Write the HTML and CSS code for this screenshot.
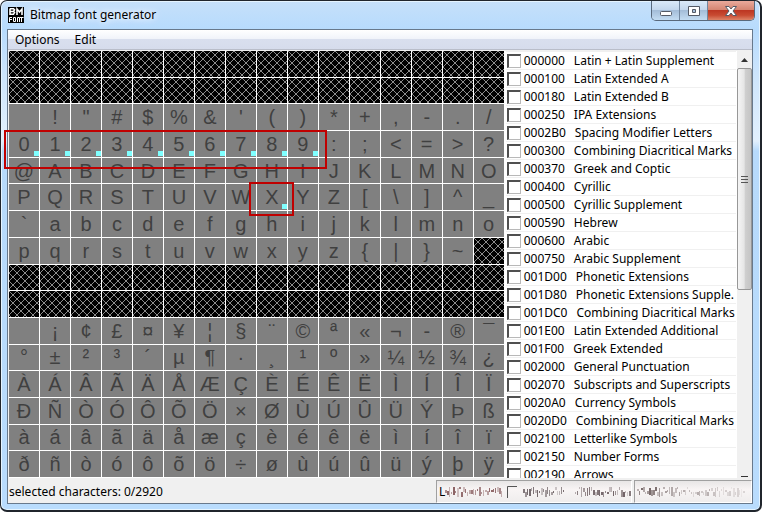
FILE: index.html
```html
<!DOCTYPE html>
<html lang="en">
<head>
  <meta charset="UTF-8">
  <meta name="viewport" content="width=device-width, initial-scale=1.0">
  <title>Bitmap font generator</title>
  <link rel="stylesheet" href="styles.css">
</head>
<body>
  <div class="window">
    <header class="titlebar">
      <svg class="app-icon" width="16" height="16" viewBox="0 0 16 16" aria-hidden="true">
        <rect width="16" height="16" fill="#000"/>
        <g fill="none" stroke="#fff">
          <path stroke-width="1.6" d="M2 1.800h3.500l1 1-1 1.700H2M5.500 4.500l1 1-1 1.800H2V1.500M9 8V2l2.500 3L14 2v6"/>
          <path d="M1.500 15v-4.500H4M1.500 12.500H4M5.500 10.500h2v4h-2zM9.500 15v-4.500h2V15M12 10.500h3.500M13.500 10.500V15"/>
        </g>
      </svg>
      <h1>Bitmap font generator</h1>
      <div class="window-buttons">
        <button class="win-button" aria-label="Minimize">
          <svg width="14" height="12" viewBox="0 0 14 12"><rect x="1.500" y="6.500" width="11" height="4" rx="1" fill="#fff" stroke="#545a66"/></svg>
        </button>
        <button class="win-button" aria-label="Maximize">
          <svg width="14" height="12" viewBox="0 0 14 12"><path fill="#fff" stroke="#545a66" fill-rule="evenodd" d="M1.500 1.500h11v9h-11zM5.500 4.500h3v3h-3z"/></svg>
        </button>
        <button class="win-button close" aria-label="Close">
          <svg width="14" height="12" viewBox="0 0 14 12"><path fill="#fff" stroke="#545a66" d="M1.500 1.500H5L7 4l2-2.500h3.500L9 6l3.500 4.500H9L7 8l-2 2.500H1.500L5 6z"/></svg>
        </button>
      </div>
    </header>

    <div class="client">
      <nav class="menubar">
        <button>Options</button>
        <button>Edit</button>
      </nav>

      <main class="content">
        <div class="glyphs" id="glyphs">
          <div class="mark digits"></div>
          <div class="mark letter"></div>
        </div>
        <div class="sidebar">
          <div class="ranges" id="ranges"></div>
          <div class="scrollbar">
            <svg class="arrow" width="15" height="17" viewBox="0 0 15 17"><path d="M4 11l3.500-4 3.500 4z" fill="#333"/></svg>
            <div class="thumb"><i></i><i></i><i></i></div>
            <svg class="arrow down" width="15" height="4" viewBox="0 0 15 4"><path d="M4 2h7v1H4z" fill="#333"/></svg>
          </div>
        </div>
      </main>

      <footer class="statusbar">
        <span>selected characters: 0/2920</span>
        <div class="panes">
          <div class="pane wide">L
            <svg class="smear" id="smearLeft" height="18"></svg>
          </div>
          <div class="pane">
            <svg class="smear" id="smearRight" height="18"></svg>
          </div>
        </div>
      </footer>
    </div>
  </div>
  <script src="app.js"></script>
</body>
</html>
```
FILE: styles.css
```css
* {
  box-sizing: border-box;
}

body {
  margin: 0;
  height: 100vh;
  background: #fff;
  font-family: "Noto Sans", "Open Sans", sans-serif;
  font-size: 12px;
  color: #000;
}

button {
  font: inherit;
  color: inherit;
  border: none;
  background: none;
  padding: 0;
  margin: 0;
}

.window {
  display: flex;
  flex-direction: column;
  height: 100vh;
  padding: 0 7px 6px 6px;
  border: 1px solid #20252c;
  border-right-width: 2px;
  border-bottom-width: 2px;
  border-radius: 7px;
  background: linear-gradient(#c6e0fa, #b7dbfd 28px, #cfe6fc 80px, #e2f0fd 140px, #b7dafb 150px, #b9dcfd);
  box-shadow: inset 0 0 0 1px #e5f4ff;
}

.titlebar {
  display: flex;
  align-items: flex-start;
  height: 28px;
  padding-left: 1px;
}

.app-icon {
  margin-top: 6px;
}

.titlebar h1 {
  flex: 1;
  margin: 5px 0 0 6px;
  font-size: 12px;
  font-weight: normal;
  line-height: 18px;
  text-shadow: 0 0 6px #fff, 0 0 10px #fff;
}

.window-buttons {
  display: flex;
  margin-right: -2px;
  border: 1px solid #59697c;
  border-top: none;
  border-radius: 0 0 5px 5px;
  overflow: hidden;
}

.win-button {
  display: flex;
  align-items: center;
  justify-content: center;
  width: 28px;
  height: 19px;
  background: linear-gradient(#dae9f8, #c2d6ec 48%, #a4bdd8 50%, #c3dcf2);
  border-right: 1px solid #71869e;
}

.win-button.close {
  width: 46px;
  border-right: none;
  background: linear-gradient(#e9aa9c, #d48572 46%, #bd3723 50%, #c84b32 75%, #dd8468);
}

.client {
  flex: 1;
  min-height: 0;
  display: flex;
  flex-direction: column;
  border: 1px solid #68798c;
  background: #f0f0f0;
}

.menubar {
  display: flex;
  gap: 15px;
  flex: none;
  height: 20px;
  padding-left: 7px;
  border-bottom: 1px solid #b9bdc9;
  background: linear-gradient(#fff, #f1f4fa 45%, #d9dfee 50%, #d6dcec);
}

.content {
  flex: 1;
  min-height: 0;
  display: flex;
  border-top: 1px solid #f0f0f0;
}

.glyphs {
  flex: 497;
  position: relative;
  display: grid;
  grid-template-columns: repeat(16, 1fr);
  grid-template-rows: repeat(16, 1fr);
  padding-left: 1px;
}

.glyph {
  position: relative;
  min-height: 0;
  border-right: 1px solid #fff;
  border-bottom: 1px solid #fff;
  background: #808080;
  color: #404040;
  font-family: "Liberation Sans", Arial, sans-serif;
  font-size: 20px;
  line-height: 24px;
}

.glyph.empty {
  background-color: #000;
  background-image:
    linear-gradient(45deg, transparent 46%, #8c8c8c 46% 54%, transparent 54%),
    linear-gradient(-45deg, transparent 46%, #8c8c8c 46% 54%, transparent 54%);
  background-size: 8px 8px;
}

.glyph.selected::after {
  content: "";
  position: absolute;
  right: 0;
  bottom: 1px;
  width: 5px;
  height: 5px;
  background: #80ffff;
}

/* outlines drawn over the picked characters */
.mark {
  position: absolute;
  z-index: 1;
  border: 2px solid #c00000;
  pointer-events: none;
}

.mark.digits {
  left: -4px;
  top: 79px;
  width: 323px;
  height: 39px;
}

.mark.letter {
  left: 241px;
  top: 131px;
  width: 45px;
  height: 34px;
}

.sidebar {
  flex: 248;
  min-width: 0;
  display: flex;
  background: #fff;
}

.ranges {
  flex: 1;
  min-width: 0;
  padding: 0 1px;
  overflow: hidden;
}

.range {
  display: flex;
  align-items: center;
  height: 18px;
  border-top: 1px solid #f0f0f0;
  white-space: nowrap;
  overflow: hidden;
}

.range input {
  appearance: none;
  flex: none;
  width: 14px;
  height: 14px;
  margin: 0 3px 0 1px;
  border: 1px solid #b8b8b8;
  border-top: 2px solid #505050;
  border-left: 2px solid #505050;
  background: #fff;
}

.range .code {
  margin-right: 9px;
}

.scrollbar {
  flex: none;
  display: flex;
  flex-direction: column;
  width: 15px;
  background: #f0f0f0;
}

.arrow {
  flex: none;
}

.arrow.down {
  margin-top: auto;
}

.thumb {
  display: flex;
  flex-direction: column;
  align-items: center;
  justify-content: center;
  gap: 2px;
  height: 52%;
  border: 1px solid #979797;
  border-radius: 2px;
  background: linear-gradient(to right, #f5f5f5, #e5e5e5 48%, #cfcfcf 55%, #c4c4c4);
}

.thumb i {
  width: 7px;
  height: 1px;
  background: #555;
}

.statusbar {
  flex: none;
  display: flex;
  justify-content: space-between;
  height: 25px;
  padding-left: 1px;
  line-height: 28px;
}

.panes {
  display: flex;
  width: 316px;
  height: 23px;
  margin-top: 2px;
  gap: 2px;
}

.pane {
  flex: 117;
  display: flex;
  align-items: center;
  overflow: hidden;
  border: 1px solid #a0a0a0;
  border-right-color: #fff;
  border-bottom-color: #fff;
  padding-left: 2px;
  background: linear-gradient(#e8e6e6, #f8f4f4 40%, #efeded);
}

.pane.wide {
  flex: 197;
}

.smear {
  flex: 1;
  min-width: 0;
}
```
FILE: app.js
```js
const rows = [
  '', '',
  ' !"#$%&\'()*+,-./',
  '0123456789:;<=>?',
  '@ABCDEFGHIJKLMNO',
  'PQRSTUVWXYZ[\\]^_',
  '`abcdefghijklmno',
  'pqrstuvwxyz{|}~',
  '', '',
  ' ¡¢£¤¥¦§¨©ª«¬-®¯',
  '°±²³´µ¶·¸¹º»¼½¾¿',
  'ÀÁÂÃÄÅÆÇÈÉÊËÌÍÎÏ',
  'ÐÑÒÓÔÕÖ×ØÙÚÛÜÝÞß',
  'àáâãäåæçèéêëìíîï',
  'ðñòóôõö÷øùúûüýþÿ'
];
const selected = '0123456789X';

const ranges = [
  ['000000', 'Latin + Latin Supplement'],
  ['000100', 'Latin Extended A'],
  ['000180', 'Latin Extended B'],
  ['000250', 'IPA Extensions'],
  ['0002B0', 'Spacing Modifier Letters'],
  ['000300', 'Combining Diacritical Marks'],
  ['000370', 'Greek and Coptic'],
  ['000400', 'Cyrillic'],
  ['000500', 'Cyrillic Supplement'],
  ['000590', 'Hebrew'],
  ['000600', 'Arabic'],
  ['000750', 'Arabic Supplement'],
  ['001D00', 'Phonetic Extensions'],
  ['001D80', 'Phonetic Extensions Supple.'],
  ['001DC0', 'Combining Diacritical Marks'],
  ['001E00', 'Latin Extended Additional'],
  ['001F00', 'Greek Extended'],
  ['002000', 'General Punctuation'],
  ['002070', 'Subscripts and Superscripts'],
  ['0020A0', 'Currency Symbols'],
  ['0020D0', 'Combining Diacritical Marks'],
  ['002100', 'Letterlike Symbols'],
  ['002150', 'Number Forms'],
  ['002190', 'Arrows']
];

const glyphs = document.getElementById('glyphs');
for (const row of rows) {
  for (let i = 0; i < 16; i++) {
    const cell = document.createElement('button');
    cell.className = 'glyph';
    if (i >= row.length) {
      cell.classList.add('empty');
    } else {
      cell.textContent = row[i];
      if (selected.includes(row[i])) cell.classList.add('selected');
    }
    glyphs.appendChild(cell);
  }
}

const list = document.getElementById('ranges');
for (const [code, name] of ranges) {
  const label = document.createElement('label');
  label.className = 'range';
  label.innerHTML = `<input type="checkbox"><span class="code">${code}</span><span>${name}</span>`;
  list.appendChild(label);
}

// worn-out marks in the status panes
let seed = 7;
function rand() {
  seed = (seed * 1103515245 + 12345) % 2147483648;
  return seed / 2147483648;
}

function marks(from, to, color, fade) {
  let out = '';
  for (let x = from; x < to; x += 2) {
    const top = 4 + Math.floor(rand() * 6);
    const len = 2 + Math.floor(rand() * (13 - top));
    const alpha = (0.25 + rand() * 0.65) * (fade ? 1 - (x - from) / (to - from) * 0.8 : 1);
    out += `<rect x="${x}" y="${top}" width="${1 + Math.round(rand())}" height="${len}" fill="${color}" opacity="${alpha.toFixed(2)}"/>`;
  }
  return out;
}

document.getElementById('smearLeft').innerHTML =
  marks(0, 58, '#7a4a4c') +
  '<path d="M62.500 15V3.500H72" fill="none" stroke="#555"/>' +
  marks(78, 120, '#5c5054') +
  marks(130, 186, '#5c4c50');
document.getElementById('smearRight').innerHTML = marks(0, 108, '#5c4c4c', true);
```
